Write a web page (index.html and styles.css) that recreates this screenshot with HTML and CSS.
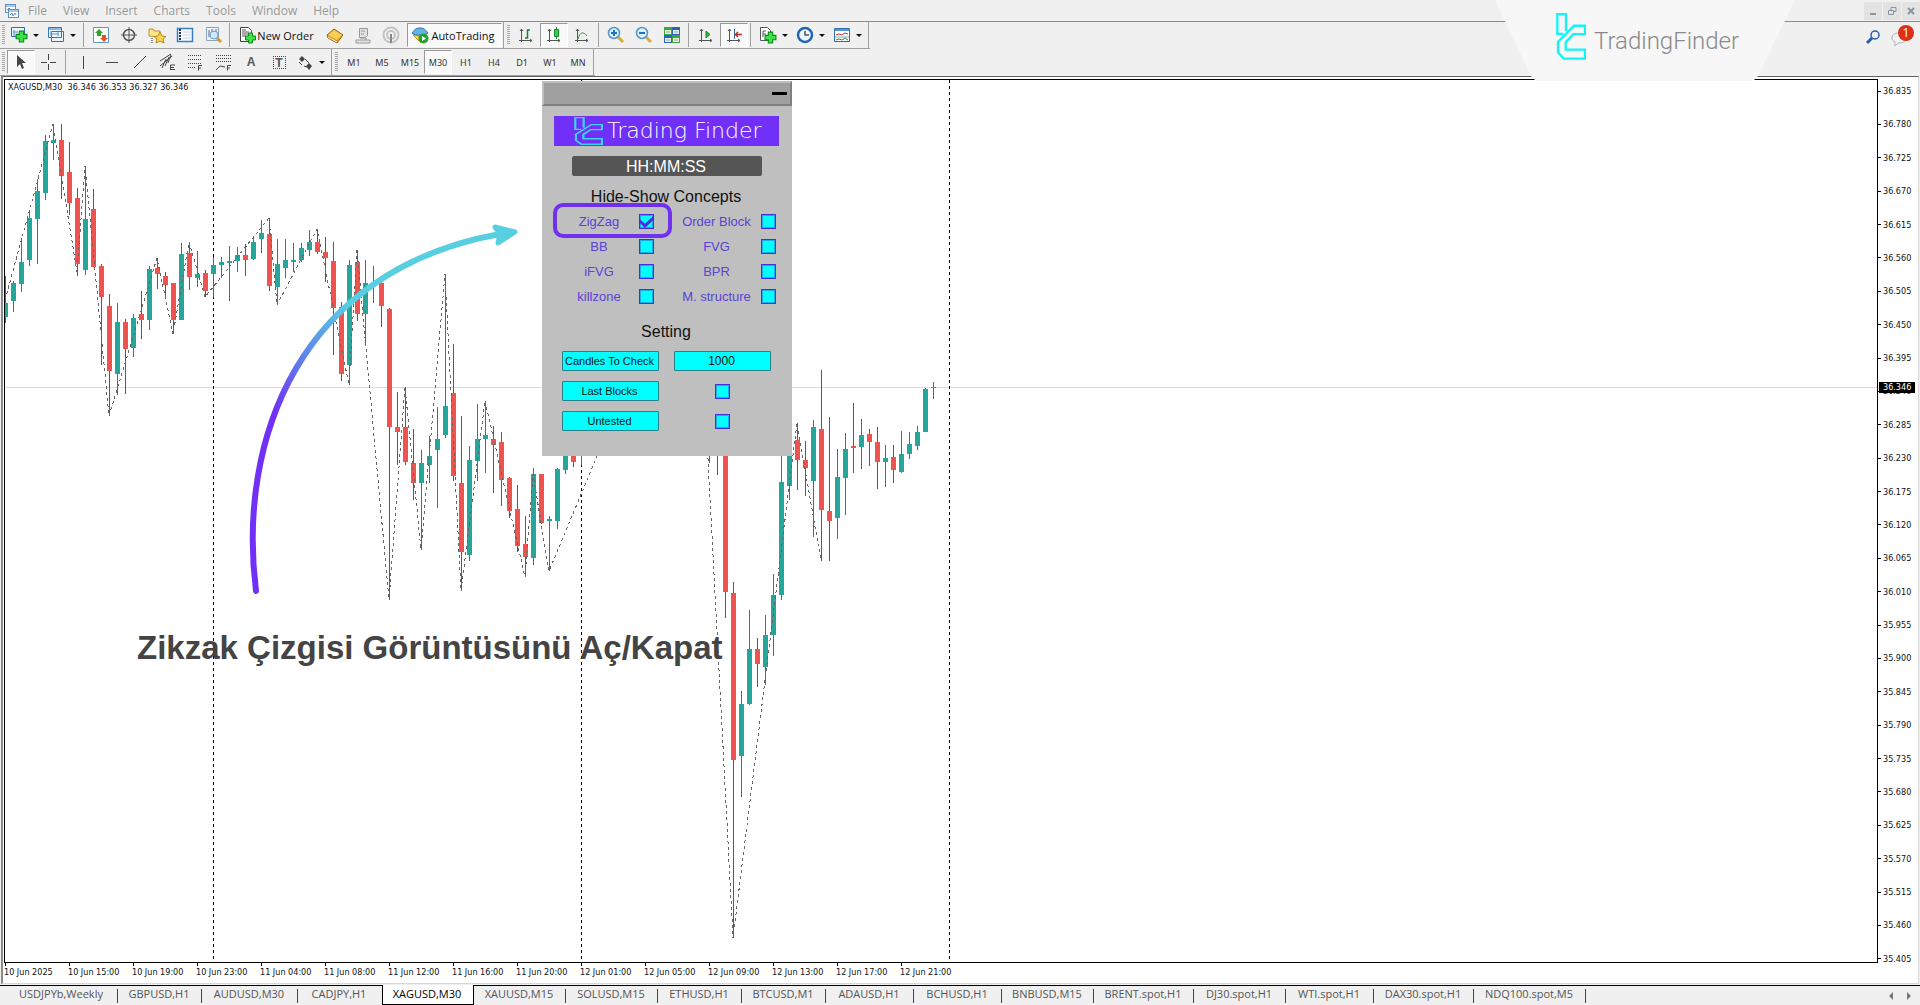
FILE: index.html
```html
<!DOCTYPE html>
<html lang="tr">
<head>
<meta charset="utf-8">
<title>XAGUSD,M30</title>
<link rel="stylesheet" href="styles.css">
</head>
<body>
<svg class="defs" aria-hidden="true">
  <symbol id="logo" viewBox="0 0 90 140" preserveAspectRatio="none">
    <path d="M30 54V3H4V62H22" /><path d="M87 38H54L6 86V117L23 136H87V109H29V87L52 63H87Z" />
  </symbol>
  <symbol id="plus" viewBox="0 0 12 12"><path d="M4 1h4v3h3v4H8v3H4V8H1V4h3z" fill="#3fe04a" stroke="#0a8a14"/></symbol>
  <symbol id="axes" viewBox="0 0 18 18"><path d="M4.500 3v13M2 14.500h13M3 5l1.500-2L6 5M13 13l2 1.500-2 1.500" fill="none" stroke="#555"/></symbol>
</svg>

<header class="menubar">
  <svg class="app-icon" viewBox="0 0 16 16" fill="#fff" stroke="#5b90c8"><rect x="1.500" y="1.500" width="10" height="8"/><path d="M1 3h11M3 7l2-2 2 2"/><rect x="4.500" y="6.500" width="10" height="8"/><path d="M5 8h9M6 12l2-2 1 3 2-3 1 2"/></svg>
  <nav class="menu">
    <a href="#">File</a><a href="#">View</a><a href="#">Insert</a><a href="#">Charts</a><a href="#">Tools</a><a href="#">Window</a><a href="#">Help</a>
  </nav>
  <div class="window-buttons">
    <button aria-label="Minimize"><svg viewBox="0 0 18 18"><path d="M6 12h6" stroke-width="2"/></svg></button>
    <button aria-label="Restore"><svg viewBox="0 0 18 18"><path d="M5.500 8.500h5v4h-5zM8 8V5.500h5v4h-2" /></svg></button>
    <button aria-label="Close"><svg viewBox="0 0 18 18"><path d="M6 6l6 6M12 6l-6 6" stroke-width="2"/></svg></button>
  </div>
</header>

<div class="toolbars">
  <div class="toolbar">
    <span class="grip"></span>
    <button class="tool tool-menu" aria-label="New chart"><svg viewBox="0 0 18 18"><path d="M1.500 1.500h13v9h-13z" fill="#eaf5ff" stroke="#2a6fb5"/><path d="M4 4v6M3 6h5" stroke="#5b8ec4"/><use href="#plus" x="5" y="4" width="13" height="13"/></svg></button>
    <button class="tool tool-menu" aria-label="Profiles"><svg viewBox="0 0 18 18" stroke="#2f78bd" fill="#eaf5ff"><path d="M4.500 5.500h12v10h-12zM1.500 1.500h13v10h-13z"/><path d="M2 3h12"/><path d="M4 5v5M3 8h9M11 6v4" stroke="#6b9cc9"/></svg></button>
    <span class="sep"></span>
    <button class="tool" aria-label="Market watch"><svg viewBox="0 0 18 18"><path d="M1.500 1.500h15v15h-15z" fill="#fff" stroke="#5a96cf"/><path d="M7 3l4 4H9v3H5V7H3z" fill="#2ca52c"/><path d="M12 16l-4-4h2V9h4v3h2z" fill="#d95a25"/></svg></button>
    <button class="tool" aria-label="Data window"><svg viewBox="0 0 18 18" fill="none" stroke="#555"><circle cx="9" cy="9" r="5.500" stroke-width="1.500"/><path d="M9 1v16M1 9h16"/></svg></button>
    <button class="tool" aria-label="Favorites"><svg viewBox="0 0 18 18"><path d="M1 10V3h4l1 2h6v6z" fill="#ffe684" stroke="#b99334"/><path d="M4 12v5" stroke="#333" stroke-dasharray="1 1"/><path d="M12 6l2 4 4 .5-3 2.500 1 4-4-2-4 2 1-4-3-2.500 4-.5z" fill="#ffd34a" stroke="#b98a1d"/></svg></button>
    <button class="tool" aria-label="Navigator"><svg viewBox="0 0 18 18"><path d="M1.500 2.500h15v13h-15z" fill="#f4faff" stroke="#3a7fc0" stroke-width="1.500"/><path d="M4 3v12" stroke="#333" stroke-width="2" stroke-dasharray="2 1"/><path d="M7 6h8M7 9h8M7 12h8" stroke="#c9daec"/></svg></button>
    <button class="tool" aria-label="Strategy tester"><svg viewBox="0 0 18 18"><path d="M2.500 1.500h12v13h-12z" fill="#eef3f8" stroke="#8ca4bc"/><path d="M5 4v7M8 3v5M12 3v4" stroke="#54738f"/><path d="M13 12l4 4" stroke="#d29d2b" stroke-width="3"/><circle cx="10" cy="9" r="4" fill="#cfe9fb" stroke="#6b9fca"/></svg></button>
    <span class="sep"></span>
    <button class="tool tool-order"><svg viewBox="0 0 18 18"><path d="M2.500 1.500h8l3 3v11h-11z" fill="#fff" stroke="#444"/><path d="M4 4h4M4 6h7M4 8h6M4 10h4" stroke="#555"/><use href="#plus" x="6" y="6" width="13" height="12"/></svg>New Order</button>
    <button class="tool" aria-label="Editor"><svg viewBox="0 0 18 18"><path d="M1 9l7-6 9 6-6 8-9-5z" fill="#d9982a" stroke="#9c6b10"/><path d="M2 9l6-5 8 5-5 5z" fill="#f7cf55"/><path d="M2 11l9 5" stroke="#fff3c0"/></svg></button>
    <button class="tool" aria-label="Experts"><svg viewBox="0 0 18 18" fill="#e2e2e2" stroke="#989898"><path d="M5.500 2.500h8v7l-2 2h-6zM2 14h14v3H2zM6 12h6v2M7 5h4M7 8h3"/></svg></button>
    <button class="tool" aria-label="Signals"><svg viewBox="0 0 18 18" fill="none" stroke="#c4c4c4" stroke-width="2"><circle cx="9" cy="9" r="7.500"/><circle cx="9" cy="9" r="4"/><path d="M9 8v9" stroke="#888"/></svg></button>
    <button class="tool tool-auto pressed"><svg viewBox="0 0 18 18"><path d="M2 9h14l-6 8z" fill="#f5cf55" stroke="#c79324"/><path d="M1 7c2-2 3-5 8-5s6 3 8 5c-3 3-13 3-16 0z" fill="#63b4e6" stroke="#2474ad"/><circle cx="12.500" cy="12.500" r="5" fill="#23a52d"/><path d="M11 10l4 2.500-4 2.500z" fill="#fff"/></svg>AutoTrading</button>
    <span class="edge"></span>
    <span class="grip"></span>
    <button class="tool" aria-label="Bar chart"><svg viewBox="0 0 18 18"><use href="#axes"/><path d="M8 12h2.500V4H13" fill="none" stroke="#168a2b" stroke-width="1.500"/></svg></button>
    <button class="tool pressed" aria-label="Candlesticks"><svg viewBox="0 0 18 18"><use href="#axes"/><path d="M11.500 1v12" stroke="#168a2b"/><path d="M9.500 3.500h4v7h-4z" fill="#37cf4a" stroke="#168a2b"/></svg></button>
    <button class="tool" aria-label="Line chart"><svg viewBox="0 0 18 18"><use href="#axes"/><path d="M5 13c2-7 5-8 9-3" fill="none" stroke="#3a9a48"/></svg></button>
    <span class="sep"></span>
    <button class="tool" aria-label="Zoom in"><svg viewBox="0 0 18 18"><path d="M11 11l5 5" stroke="#d8ac35" stroke-width="3"/><circle cx="7" cy="7" r="5.500" fill="#dcf1fd" stroke="#4f94cb" stroke-width="1.500"/><path d="M4 7h6M7 4v6" stroke="#2172b8" stroke-width="2"/></svg></button>
    <button class="tool" aria-label="Zoom out"><svg viewBox="0 0 18 18"><path d="M11 11l5 5" stroke="#d8ac35" stroke-width="3"/><circle cx="7" cy="7" r="5.500" fill="#dcf1fd" stroke="#4f94cb" stroke-width="1.500"/><path d="M4 7h6" stroke="#2172b8" stroke-width="2"/></svg></button>
    <button class="tool" aria-label="Tile windows"><svg viewBox="0 0 18 18"><path d="M1 1h8v8H1z" fill="#3fa53a"/><path d="M9 1h8v8H9z" fill="#2b63b8"/><path d="M1 9h8v8H1z" fill="#2b63b8"/><path d="M9 9h8v8H9z" fill="#3fa53a"/><path d="M2 4h6v4H2zM10 4h6v4h-6zM2 12h6v4H2zM10 12h6v4h-6z" fill="#e8f3e2"/><path d="M3 6h4M11 6h4M3 14h4M11 14h4" stroke="#7fa8c8"/></svg></button>
    <span class="sep"></span>
    <button class="tool" aria-label="Auto scroll"><svg viewBox="0 0 18 18"><use href="#axes"/><path d="M9 5l4 3.500-4 3.500z" fill="#2fb53c" stroke="#168a2b"/></svg></button>
    <button class="tool pressed" aria-label="Chart shift"><svg viewBox="0 0 18 18"><use href="#axes"/><path d="M9.500 3v10" stroke="#2b5fa8"/><path d="M17 8.500h-6M13 6l-2.500 2.500L13 11" fill="none" stroke="#b3312a" stroke-width="1.500"/></svg></button>
    <span class="sep"></span>
    <button class="tool tool-menu first-menu" aria-label="Indicators"><svg viewBox="0 0 18 18"><path d="M1.500 1.500h7l3 3v10h-10z" fill="#fff" stroke="#555"/><path d="M4 11V5h3M4 8h3" fill="none" stroke="#555"/><use href="#plus" x="5" y="5" width="13" height="13"/></svg></button>
    <button class="tool tool-menu" aria-label="Periods"><svg viewBox="0 0 18 18"><circle cx="9" cy="9" r="7" fill="#eef7ff" stroke="#1e66b4" stroke-width="2.500"/><path d="M9 5v4h4" fill="none" stroke="#555" stroke-width="1.500"/></svg></button>
    <button class="tool tool-menu" aria-label="Templates"><svg viewBox="0 0 18 18"><path d="M1.500 2.500h15v13h-15z" fill="#fff" stroke="#2c6ea8"/><path d="M2 4h14" stroke="#5598d0" stroke-width="2"/><path d="M3 9l3-1 3 1 3-2 3 1" fill="none" stroke="#c0392b"/><path d="M2 11h14" stroke="#7aa6cc"/><path d="M3 14l3-1 3 1 3-2 3 2" fill="none" stroke="#2e8b3d"/></svg></button>
    <span class="edge"></span>
  </div>

  <div class="toolbar">
    <span class="grip"></span>
    <button class="tool pressed" aria-label="Cursor"><svg viewBox="0 0 18 18"><path d="M5 2v12l3-3 2 5 2-1-2-5h4z" fill="#444"/></svg></button>
    <button class="tool" aria-label="Crosshair"><svg viewBox="0 0 18 18" stroke="#444"><path d="M8.500 1v6M8.500 11v6M1 9.500h6M10 9.500h6"/></svg></button>
    <span class="sep"></span>
    <button class="tool" aria-label="Vertical line"><svg viewBox="0 0 18 18" stroke="#444"><path d="M9.500 3v13"/></svg></button>
    <button class="tool" aria-label="Horizontal line"><svg viewBox="0 0 18 18" stroke="#444"><path d="M4 9.500h12"/></svg></button>
    <button class="tool" aria-label="Trendline"><svg viewBox="0 0 18 18" stroke="#444"><path d="M4 15L16 3"/></svg></button>
    <button class="tool" aria-label="Equidistant channel"><svg viewBox="0 0 18 18" stroke="#444" fill="none"><path d="M2 13L14 3M2 8L13 1M4 15l4-9M7 13l4-9M10 10l3-8M12.500 17v-5H17M12 14.500h4M12 16.500h5"/></svg></button>
    <button class="tool" aria-label="Fibonacci retracement"><svg viewBox="0 0 18 18" stroke="#444" fill="none"><path d="M2 2.500h14M2 6.500h14M2 10.500h14M2 14.500h8" stroke-dasharray="1 1"/><path d="M12.500 17.500v-5H16M12 15h3"/></svg></button>
    <button class="tool" aria-label="Fibonacci fan"><svg viewBox="0 0 18 18" stroke="#444" fill="none"><path d="M2 2.500h15M2 5.500h15M2 8.500h15" stroke-dasharray="1 1"/><path d="M2 17l4-4 5 1M13.500 17.500v-5H17M13 15h3"/></svg></button>
    <button class="tool glyph">A</button>
    <button class="tool glyph"><span class="text-label">T</span></button>
    <button class="tool tool-menu" aria-label="Arrows"><svg viewBox="0 0 18 18" fill="#444"><path d="M3 6l3-3 3 3-3 3zM10 13l3-3 3 3-3 4z"/><path d="M3 9l3 3M9 6l4 4M8 13l3 1" stroke="#444"/></svg></button>
    <span class="edge"></span>
    <span class="grip"></span>
    <button class="tool period">M1</button><button class="tool period">M5</button><button class="tool period">M15</button><button class="tool period pressed">M30</button><button class="tool period">H1</button><button class="tool period">H4</button><button class="tool period">D1</button><button class="tool period">W1</button><button class="tool period">MN</button>
    <span class="edge"></span>
  </div>

  <div class="corner-tools">
    <button aria-label="Search"><svg viewBox="0 0 16 16" width="16" height="16" fill="none" stroke="#2460b0"><circle cx="10" cy="6" r="4" stroke-width="1.500"/><path d="M7 9l-5 5" stroke-width="3"/></svg></button>
    <button class="chat" aria-label="Messages"><svg viewBox="0 0 20 16" width="20" height="16"><path d="M9 2c-5 0-7 2-7 5 0 2 1 3 3 4v4l3-3c5 0 8-1 8-5s-3-5-7-5z" fill="#f2f2f5" stroke="#b0b0b8"/></svg><span class="badge">1</span></button>
  </div>
</div>

<div class="brand">
  <svg class="brand-mark"><use href="#logo"/></svg>
  <span>TradingFinder</span>
</div>

<main class="chart">
  <div class="plot">
    <svg class="candles" aria-hidden="true">
      <defs><linearGradient id="sweep" gradientUnits="userSpaceOnUse" x1="270" y1="410" x2="350" y2="305"><stop offset="0" stop-color="#7030f8"/><stop offset=".5" stop-color="#5f86e8"/><stop offset="1" stop-color="#58cfe0"/></linearGradient></defs>
      <g transform="translate(-5 -80)">
        <path class="price-line" d="M6 387.500H4000"/>
        <path class="day" d="M213.500 80V962M581.500 80V962M949.500 80V962"/>
        <path class="wick up" d="M5.500 276V323M13.500 281V312M21.500 238V292M29.500 211V266M37.500 179V264M45.500 135V200M53.500 124V160M85.500 166V275M117.500 303V395M133.500 314V357M149.500 266V330M181.500 243V320M197.500 251V287M213.500 257V297M221.500 257V278M229.500 246V301M237.500 247V272M253.500 238V260M261.500 220V253M277.500 239V305M285.500 239V278M293.500 243V272M301.500 243V262M309.500 230V256M349.500 260V385M365.500 260V343M373.500 266V303M421.500 450V550M429.500 436V483M437.500 407V508M445.500 274V438M469.500 446V561M477.500 404V481M485.500 401V473M533.500 468V565M549.500 516V571M557.500 468V529M565.500 440V474M581.500 440V465M741.500 691V797M749.500 610V705M765.500 615V685M773.500 574V656M781.500 450V600M789.500 450V500M813.500 420V537M837.500 449V539M845.500 433V515M861.500 419V469M885.500 445V487M901.500 431V473M909.500 432V459M917.500 426V450M925.500 388V432M933.500 382V399"/>
        <path class="wick down" d="M61.500 124V199M69.500 142V215M77.500 188V276M93.500 189V267M101.500 264V365M109.500 294V416M125.500 319V394M141.500 291V339M157.500 258V289M165.500 272V298M173.500 283V334M189.500 242V290M205.500 270V297M245.500 244V276M269.500 218V291M317.500 229V254M325.500 237V282M333.500 242V355M341.500 302V381M357.500 250V321M381.500 276V327M389.500 308V600M397.500 392V465M405.500 387V465M413.500 429V500M453.500 344V481M461.500 416V591M493.500 426V493M501.500 432V506M509.500 477V518M517.500 485V552M525.500 516V577M541.500 474V524M573.500 440V467M709.500 440V463M717.500 440V475M725.500 440V618M733.500 582V938M757.500 638V687M797.500 423V490M805.500 441V496M821.500 370V561M829.500 417V561M853.500 403V473M869.500 429V466M877.500 427V489M893.500 445V483"/>
        <path class="body up" d="M5.500 303V317M13.500 283V301M21.500 262V284M29.500 218V260M37.500 191V219M45.500 141V193M53.500 140V143M85.500 219V270M117.500 322V374M133.500 318V348M149.500 269V320M181.500 254V320M197.500 274V278M213.500 265V274M221.500 262V265M229.500 261V263M237.500 255V261M253.500 242V259M261.500 233V239M277.500 264V287M285.500 260V268M293.500 260V262M301.500 248V260M309.500 242V250M349.500 265V365M365.500 283V314M373.500 283V284M421.500 463V483M429.500 456V465M437.500 439V450M445.500 406V435M469.500 460V555M477.500 439V461M485.500 435V439M533.500 474V558M549.500 519V521M557.500 469V521M565.500 445V470M741.500 704V756M749.500 649V704M765.500 635V667M773.500 595V635M781.500 482V595M789.500 440V486M813.500 427V481M837.500 477V518M845.500 449V478M861.500 435V447M885.500 458V462M901.500 454V472M909.500 444V454M917.500 432V446M925.500 389V432M933.500 387V388"/>
        <path class="body down" d="M61.500 140V176M69.500 172V203M77.500 198V264M93.500 209V267M101.500 266V297M109.500 306V371M125.500 322V349M141.500 314V320M157.500 268V274M165.500 276V285M173.500 283V320M189.500 253V277M205.500 273V291M245.500 255V260M269.500 234V286M317.500 242V252M325.500 252V258M333.500 261V308M341.500 307V374M357.500 262V314M381.500 283V306M389.500 309V427M397.500 427V432M405.500 427V462M413.500 463V483M453.500 393V476M461.500 483V552M493.500 439V445M501.500 442V480M509.500 478V511M517.500 509V546M525.500 544V557M541.500 474V523M573.500 445V462M725.500 440V592M733.500 593V760M757.500 649V664M797.500 440V460M805.500 460V468M821.500 429V510M829.500 511V521M853.500 446V448M869.500 434V442M877.500 442V462M893.500 457V470"/>
        <path class="zigzag" d="M5 300L53 124L77 272L85 166L109 416L157 258L173 334L189 242L205 297L269 218L277 305L317 229L349 385L357 250L389 600L405 387L421 550L445 274L461 591L485 401L525 577L533 474L549 571L613 418M707 440L733 938L797 423L821 561"/>
        <path class="arrow" d="M256 591C237 440 299 270 500 234"/>
        <path class="arrow-head" d="M495 227L515 232L498 243L500 234Z"/>
      </g>
    </svg>
    <p class="ohlc">XAGUSD,M30&nbsp; 36.346 36.353 36.327 36.346</p>
    <p class="caption">Zikzak Çizgisi Görüntüsünü Aç/Kapat</p>

    <form class="panel">
      <div class="panel-bar"><button type="button" aria-label="Collapse"></button></div>
      <div class="panel-logo"><svg class="panel-mark"><use href="#logo"/></svg><span>Trading Finder</span></div>
      <div class="clock">HH:MM:SS</div>
      <h2>Hide-Show Concepts</h2>
      <div class="options">
        <label class="highlighted"><span>ZigZag</span><input type="checkbox" checked></label>
        <label><span>Order Block</span><input type="checkbox"></label>
        <label><span>BB</span><input type="checkbox"></label>
        <label><span>FVG</span><input type="checkbox"></label>
        <label><span>iFVG</span><input type="checkbox"></label>
        <label><span>BPR</span><input type="checkbox"></label>
        <label><span>killzone</span><input type="checkbox"></label>
        <label><span>M. structure</span><input type="checkbox"></label>
      </div>
      <h2>Setting</h2>
      <div class="settings">
        <label class="field" for="candles">Candles To Check</label><input id="candles" type="text" value="1000">
        <label class="field" for="last">Last Blocks</label><input id="last" type="checkbox">
        <label class="field" for="untested">Untested</label><input id="untested" type="checkbox">
      </div>
    </form>
  </div>

  <div class="price-axis">
    <ul>
      <li>36.835</li><li>36.780</li><li>36.725</li><li>36.670</li><li>36.615</li><li>36.560</li><li>36.505</li><li>36.450</li><li>36.395</li><li>36.340</li><li>36.285</li><li>36.230</li><li>36.175</li><li>36.120</li><li>36.065</li><li>36.010</li><li>35.955</li><li>35.900</li><li>35.845</li><li>35.790</li><li>35.735</li><li>35.680</li><li>35.625</li><li>35.570</li><li>35.515</li><li>35.460</li><li>35.405</li>
    </ul>
    <span class="price-tag">36.346</span>
  </div>

  <ul class="time-axis">
    <li>10 Jun 2025</li><li>10 Jun 15:00</li><li>10 Jun 19:00</li><li>10 Jun 23:00</li><li>11 Jun 04:00</li><li>11 Jun 08:00</li><li>11 Jun 12:00</li><li>11 Jun 16:00</li><li>11 Jun 20:00</li><li>12 Jun 01:00</li><li>12 Jun 05:00</li><li>12 Jun 09:00</li><li>12 Jun 13:00</li><li>12 Jun 17:00</li><li>12 Jun 21:00</li>
  </ul>
</main>

<footer class="tabbar">
  <nav class="tabs">
    <a href="#">USDJPYb,Weekly</a><a href="#">GBPUSD,H1</a><a href="#">AUDUSD,M30</a><a href="#" class="before-active">CADJPY,H1</a><a href="#" class="active">XAGUSD,M30</a><a href="#">XAUUSD,M15</a><a href="#">SOLUSD,M15</a><a href="#">ETHUSD,H1</a><a href="#">BTCUSD,M1</a><a href="#">ADAUSD,H1</a><a href="#">BCHUSD,H1</a><a href="#">BNBUSD,M15</a><a href="#">BRENT.spot,H1</a><a href="#">DJ30.spot,H1</a><a href="#">WTI.spot,H1</a><a href="#">DAX30.spot,H1</a><a href="#">NDQ100.spot,M5</a>
  </nav>
  <div class="tab-scroll">
    <button aria-label="Scroll tabs left"><svg viewBox="0 0 6 8"><path d="M5 0v8L1 4z"/></svg></button>
    <button aria-label="Scroll tabs right"><svg viewBox="0 0 6 8"><path d="M1 0v8l4-4z"/></svg></button>
  </div>
</footer>
</body>
</html>
```
FILE: styles.css
```css
* { box-sizing: border-box; }

body {
  margin: 0;
  height: 100vh;
  display: flex;
  flex-direction: column;
  position: relative;
  overflow: hidden;
  background: #f0f0f0;
  color: #111;
  font-family: "Open Sans", "Noto Sans", sans-serif;
  font-size: 11px;
}

button, input { font: inherit; color: inherit; margin: 0; padding: 0; border: 0; background: none; }
ul { list-style: none; margin: 0; padding: 0; }
p, h2 { margin: 0; }
a { color: inherit; text-decoration: none; }
.defs { position: absolute; width: 0; height: 0; }

/* Menu bar */
.menubar {
  display: flex;
  align-items: center;
  height: 22px;
  flex: none;
  padding-left: 4px;
  border-bottom: 1px solid #8c8c8c;
}
.app-icon { width: 16px; height: 16px; }
.menu { display: flex; gap: 16px; padding-left: 8px; font-size: 12px; color: #999; }
.window-buttons { display: flex; gap: 1px; margin-left: auto; }
.window-buttons button { width: 18px; height: 18px; background: #e3e3e3; }
.window-buttons svg { display: block; fill: none; stroke: #8b959e; }

/* Toolbars */
.toolbars { flex: none; position: relative; display: flex; flex-direction: column; align-items: flex-start; }
.toolbar {
  display: flex;
  align-items: stretch;
  height: 27px;
  padding: 1px 0;
  border-bottom: 1px solid #a0a0a0;
}
.grip {
  width: 3px;
  margin: 2px 2px;
  background: repeating-linear-gradient(#a6a6a6 0 1px, #f0f0f0 1px 2px);
}
.sep, .edge { width: 1px; background: #a0a0a0; }
.sep { margin: 0 3px 0 2px; }
.edge { margin: -1px 1px -1px 1px; }
.tool {
  width: 28px;
  display: flex;
  align-items: center;
  justify-content: center;
}
.tool svg { width: 18px; height: 18px; flex: none; }
.tool-menu { width: 37px; justify-content: flex-start; gap: 5px; padding-left: 3px; }
.tool-menu::after { content: ""; border: 3px solid transparent; border-top-color: #111; border-bottom: 0; }
.first-menu { margin-left: 2px; }
.tool-order { width: 88px; gap: 1px; padding-right: 2px; }
.tool-auto { width: 95px; margin-left: 2px; gap: 2px; padding-right: 3px; font-size: 11px; }
.pressed { background: #f9f9f9; border: 1px solid; border-color: #999 #fff #fff #999; }
.glyph { font: bold 12px "Liberation Sans", sans-serif; color: #555; }
.text-label { width: 13px; height: 13px; line-height: 12px; border: 1px dotted #444; }
.period { font-size: 9px; color: #333; font-family: "Noto Sans", sans-serif; }

.corner-tools { position: absolute; top: 5px; right: 4px; display: flex; gap: 9px; }
.corner-tools svg { display: block; }
.chat { position: relative; width: 26px; padding-top: 4px; }
.badge {
  position: absolute;
  top: -2px;
  right: 2px;
  width: 16px;
  height: 16px;
  border-radius: 8px;
  background: #dc3018;
  color: #fff;
  font-size: 12px;
  line-height: 16px;
}

/* Brand plate hanging from the top edge */
.brand {
  position: absolute;
  z-index: 2;
  top: 0;
  right: 125px;
  width: 300px;
  height: 81px;
  padding: 13px 0 0 61px;
  display: flex;
  gap: 8px;
  clip-path: polygon(0 0, 100% 0, 263px 76px, 258px 100%, 41px 100%, 36px 76px);
  background: #f7f7f7;
  color: #8a8a8a;
  font: 300 24px/56px Roboto, sans-serif;
}
.brand-mark { width: 30px; height: 47px; fill: none; stroke: #12f4fa; stroke-width: 7; }

/* Chart window */
.chart {
  flex: 1;
  min-height: 0;
  display: grid;
  grid-template-columns: 1fr 40px;
  grid-template-rows: 1fr 20px;
  margin: 0 1px 1px 1px;
  padding: 2px 0 0 1px;
  border: 1px solid #d8d8d8;
  border-top: 1px solid #606060;
  border-left: 2px solid #8a8a8a;
  background: #fff;
  font: 9px/14px "DejaVu Sans Condensed", "DejaVu Sans", sans-serif;
}
.plot { position: relative; border: 1px solid #000; }
.candles { position: absolute; inset: 0; width: 100%; height: 100%; display: block; }
.candles path { fill: none; shape-rendering: crispEdges; }
.price-line { stroke: #dadae6; }
.day { stroke: #000; stroke-dasharray: 3 3; }
.wick.up { stroke: #15877d; }
.wick.down { stroke: #a8383b; }
.body { stroke-width: 5px; }
.body.up { stroke: #26a69a; }
.body.down { stroke: #ef5350; }
.zigzag { stroke: #666; stroke-dasharray: 3 3; }
.candles .arrow { stroke: url(#sweep); stroke-width: 6px; stroke-linecap: round; shape-rendering: auto; }
.candles .arrow-head { fill: #58cfe0; stroke: #58cfe0; stroke-width: 5px; stroke-linejoin: round; shape-rendering: auto; }
.ohlc { position: absolute; top: 0; left: 3px; }
.caption {
  position: absolute;
  top: 549px;
  left: 132px;
  color: #444;
  font: bold 33px/38px "Liberation Sans", sans-serif;
  white-space: nowrap;
}

.price-axis { position: relative; grid-row: 1 / 3; grid-column: 2; padding: 5px 0 17px; }
.price-axis ul { height: 100%; display: flex; flex-direction: column; justify-content: space-between; }
.price-axis li { padding-left: 5px; background: linear-gradient(#000, #000) left center / 3px 1px no-repeat; }
.price-tag {
  position: absolute;
  top: 303px;
  left: 1px;
  width: 36px;
  padding-left: 4px;
  background: #000;
  color: #fff;
  line-height: 11px;
}
.time-axis { display: flex; }
.time-axis li {
  width: 64px;
  padding-top: 2px;
  white-space: nowrap;
  background: linear-gradient(#000, #000) 1px 0 / 1px 3px no-repeat;
}

/* Indicator panel */
.panel {
  position: absolute;
  top: 1px;
  left: 537px;
  width: 250px;
  height: 375px;
  background: #bfbfbf;
  font: 13px/15px "Liberation Sans", sans-serif;
}
.panel-bar {
  display: flex;
  justify-content: flex-end;
  height: 25px;
  padding: 9px 3px;
  background: #a0a0a0;
  border: 2px solid;
  border-color: #bfbfbf #808080 #808080 #bfbfbf;
}
.panel-bar button { width: 15px; height: 3px; background: #000; }
.panel-logo {
  display: flex;
  align-items: center;
  gap: 4px;
  width: 225px;
  height: 30px;
  margin: 10px 0 0 12px;
  padding-left: 20px;
  background: #7030f8;
  color: #fff;
  font: 200 22px/32px "DejaVu Sans", sans-serif;
  white-space: nowrap;
}
.panel-mark { width: 29px; height: 28px; flex: none; fill: none; stroke: #3fd0f5; stroke-width: 7; }
.clock {
  width: 190px;
  height: 20px;
  margin: 10px auto 0;
  padding-right: 2px;
  border-radius: 2px;
  background: #555;
  color: #fff;
  font-size: 16px;
  line-height: 21px;
  text-align: center;
}
.panel h2 { padding-right: 2px; margin-top: 11px; font-size: 16px; font-weight: 400; line-height: 20px; text-align: center; }
.options {
  display: grid;
  grid-template-columns: 92px 101px;
  gap: 10px 21px;
  margin: 7px 0 18px;
  padding-left: 20px;
  color: #5a43d6;
}
.options label { position: relative; display: flex; gap: 3px; height: 15px; white-space: nowrap; }
.options span { flex: 1; text-align: center; }
.highlighted::after {
  content: "";
  position: absolute;
  inset: -11px -18px -9px -9px;
  border: 4px solid #7030f0;
  border-radius: 10px;
}
.panel input[type="checkbox"] {
  appearance: none;
  width: 15px;
  height: 15px;
  border: 1px solid #4a2be0;
  outline: 1px solid #4a2be066;
  outline-offset: -2px;
  background: #0ff;
}
.panel input:checked::before {
  content: "";
  display: block;
  width: 13px;
  height: 13px;
  background: #4a2be0;
  clip-path: polygon(0 32%, 38% 68%, 100% 10%, 100% 40%, 38% 100%, 0 62%);
}
.panel .options + h2 { margin-top: 0; }
.settings {
  display: grid;
  grid-template-columns: 97px 97px;
  gap: 10px 15px;
  align-items: center;
  justify-items: center;
  padding: 9px 0 0 20px;
}
.field, .settings input[type="text"] {
  width: 97px;
  height: 20px;
  padding-right: 2px;
  border: 1px solid #25828a;
  border-radius: 1px;
  background: #0ff;
  font-size: 11px;
  line-height: 18px;
  text-align: center;
  white-space: nowrap;
}
.settings input[type="text"] { font-size: 12px; }

/* Chart tabs */
.tabbar {
  flex: none;
  display: flex;
  justify-content: space-between;
  height: 20px;
  padding: 0 8px 0 6px;
  border-top: 1px solid #000;
  color: #555;
}
.tabs {
  display: grid;
  grid-template-columns: 112px 84px 96px 84px 92px 92px 92px 84px 84px 88px 88px 92px 100px 92px 88px 100px 112px;
  line-height: 16px;
  text-align: center;
}
.tabs a { height: 18px; padding-right: 2px; background: linear-gradient(#444, #444) right 3px / 1px 14px no-repeat; }
.tabs .before-active { background: none; }
.tabs .active { margin-top: -1px; height: 20px; line-height: 18px; background: #fff; border: 1px solid #000; border-top: 0; color: #000; }
.tab-scroll { display: flex; gap: 12px; }
.tab-scroll button { width: 6px; }
.tab-scroll svg { display: block; width: 6px; height: 8px; fill: #777; }
```
